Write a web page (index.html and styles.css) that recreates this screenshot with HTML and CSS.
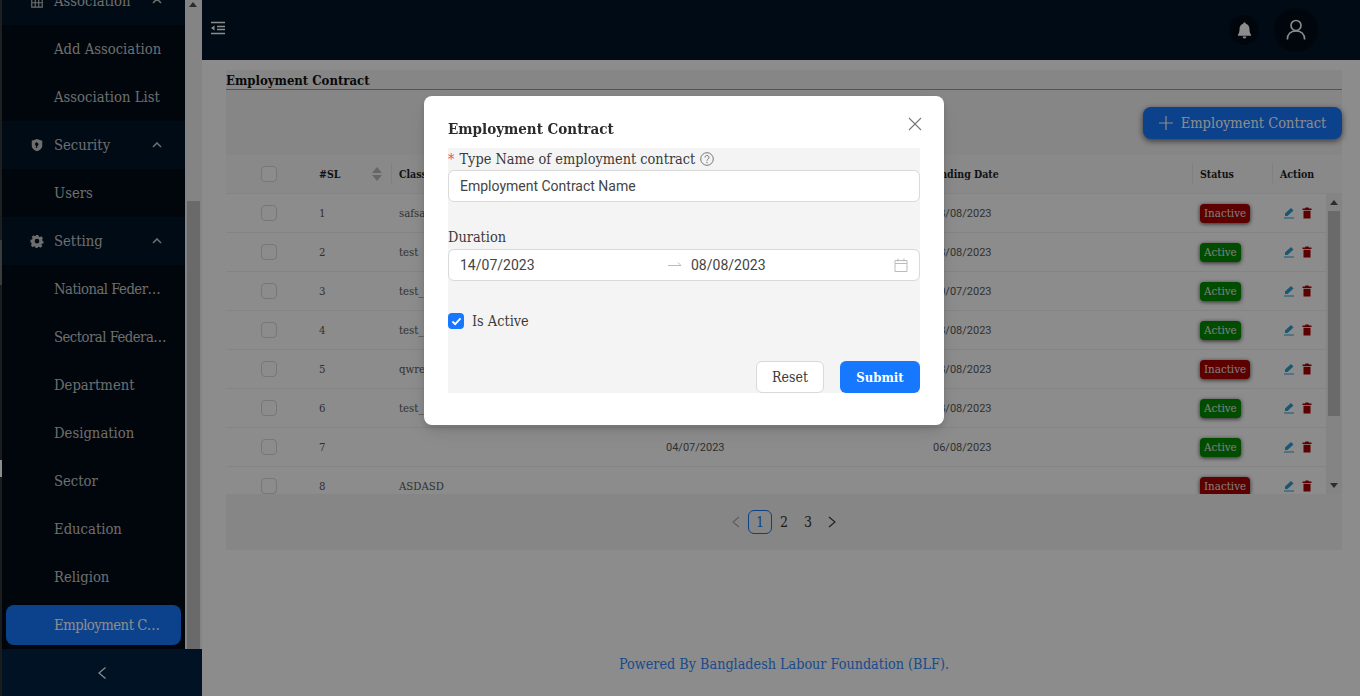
FILE: index.html
```html
<!DOCTYPE html>
<html lang="en">
<head>
  <meta charset="UTF-8" />
  <title>Employment Contract</title>
  <link rel="stylesheet" href="styles.css">
</head>
<body>
  <div class="app">
    <aside class="sider">
      <div class="edge"></div>
      <div class="sider-inner">
        <div class="sider-scroll">
          <ul class="menu">
            <li class="menu-top">
              <svg class="menu-icon" viewBox="0 0 16 16"><path d="M2 1h12v14H2zM6 1v14M10 1v14M2 6h12M2 10h12" fill="none" stroke="currentColor" stroke-width="1.3"/></svg>
              <span class="menu-label">Association</span>
              <svg class="chev" viewBox="0 0 10 6"><path d="M1 5l4-4 4 4" fill="none" stroke="currentColor" stroke-width="1.6"/></svg>
            </li>
            <li class="menu-sub">Add Association</li>
            <li class="menu-sub">Association List</li>
            <li class="menu-top">
              <svg class="menu-icon" viewBox="0 0 16 16"><path fill-rule="evenodd" d="M8 1l6 2v6c0 3-3 5-6 6-3-1-6-3-6-6V3zM8 5a2.2 2.2 0 0 0-1 4.2L6.500 11h2L8 9.300A2.200 2.200 0 0 0 8 5z" fill="currentColor"/></svg>
              <span class="menu-label">Security</span>
              <svg class="chev" viewBox="0 0 10 6"><path d="M1 5l4-4 4 4" fill="none" stroke="currentColor" stroke-width="1.6"/></svg>
            </li>
            <li class="menu-sub">Users</li>
            <li class="menu-top">
              <svg class="menu-icon" viewBox="0 0 16 16"><path fill-rule="evenodd" d="M6.500 1h3l.4 1.900 1.300.6 1.700-1 2 2.300-1.100 1.600.4 1.300L15.500 8.500v2l-1.800.5-.6 1.300 1 1.600-2.200 1.700-1.500-1-1.400.3-.5 1.100h-2l-.6-1.500-1.300-.4-1.600.9-2-2.200 1-1.600-.5-1.300L.5 9.500v-3l1.900-.3.500-1.300-1-1.600 2.100-1.800 1.600 1 1.200-.5zM8 5.500a2.700 2.700 0 1 0 0 5.400 2.700 2.700 0 0 0 0-5.400z" fill="currentColor"/></svg>
              <span class="menu-label">Setting</span>
              <svg class="chev" viewBox="0 0 10 6"><path d="M1 5l4-4 4 4" fill="none" stroke="currentColor" stroke-width="1.6"/></svg>
            </li>
            <li class="menu-sub trunc">National Feder…</li>
            <li class="menu-sub trunc">Sectoral Federa…</li>
            <li class="menu-sub">Department</li>
            <li class="menu-sub">Designation</li>
            <li class="menu-sub">Sector</li>
            <li class="menu-sub">Education</li>
            <li class="menu-sub">Religion</li>
            <li class="menu-sub selected trunc"><span>Employment C…</span></li>
          </ul>
          <div class="sider-bar">
            <span class="arrow-up"></span>
            <div class="sider-thumb"></div>
          </div>
        </div>
        <div class="sider-trigger">
          <svg viewBox="0 0 10 14" width="10" height="14"><path d="M8.500 1.500L2 7l6.500 5.500" fill="none" stroke="currentColor" stroke-width="1.200"/></svg>
        </div>
      </div>
    </aside>

    <div class="main">
      <header class="topbar">
        <svg class="fold" viewBox="0 0 16 14" width="16" height="14"><path d="M1 1.500h14M7 5.500h8M7 8.500h8M1 12.500h14" stroke="currentColor" stroke-width="1.400"/><path d="M4.500 4.500L1 7l3.500 2.500z" fill="currentColor"/></svg>
        <div class="topbar-right">
          <div class="bell-wrap">
            <svg viewBox="0 0 16 18" width="15" height="17"><path d="M8 0.500c.8 0 1.400.6 1.400 1.300C12 2.500 13.300 4.700 13.300 7.500c0 3.500.7 4.800 1.700 6v1H1v-1c1-1.200 1.700-2.500 1.700-6 0-2.800 1.300-5 3.900-5.700C6.600 1.100 7.200.5 8 .5zM6 15.500h4a2 2 0 0 1-4 0z" fill="currentColor"/></svg>
          </div>
          <div class="user-wrap">
            <svg viewBox="0 0 22 24" width="20" height="22"><circle cx="11" cy="7" r="5.500" fill="none" stroke="currentColor" stroke-width="1.800"/><path d="M1.500 22.500c0-6 4-9.500 9.500-9.500s9.500 3.500 9.500 9.500" fill="none" stroke="currentColor" stroke-width="1.800"/></svg>
          </div>
        </div>
      </header>

      <main class="content">
        <h2 class="page-title">Employment Contract</h2>
        <section class="card">
          <div class="card-tools">
            <button class="add-btn" type="button">
              <svg viewBox="0 0 14 14" width="14" height="14"><path d="M7 0v14M0 7h14" stroke="currentColor" stroke-width="1.200"/></svg>
              Employment Contract
            </button>
          </div>
          <div class="table-head">
            <div class="c-check"><span class="check"></span></div>
            <div class="c-sl">#SL<span class="sorter"><i class="sort-up"></i><i class="sort-down"></i></span></div>
            <div class="c-name">Class</div>
            <div class="c-date">Starting Date</div>
            <div class="c-date">Ending Date</div>
            <div class="c-status">Status</div>
            <div class="c-action">Action</div>
            <div class="c-gutter"></div>
          </div>
          <div class="table-body">
            <div class="rows">
              <div class="row"><div class="c-check"><span class="check"></span></div><div class="c-sl">1</div><div class="c-name">safsa</div><div class="c-date date">01/07/2023</div><div class="c-date date">08/08/2023</div><div class="c-status"><span class="tag off">Inactive</span></div><div class="c-action"><svg class="edit" viewBox="0 0 12 12"><use href="#pen"/></svg><svg class="del" viewBox="0 0 12 12"><use href="#bin"/></svg></div></div>
              <div class="row"><div class="c-check"><span class="check"></span></div><div class="c-sl">2</div><div class="c-name">test</div><div class="c-date date">01/07/2023</div><div class="c-date date">08/08/2023</div><div class="c-status"><span class="tag on">Active</span></div><div class="c-action"><svg class="edit" viewBox="0 0 12 12"><use href="#pen"/></svg><svg class="del" viewBox="0 0 12 12"><use href="#bin"/></svg></div></div>
              <div class="row"><div class="c-check"><span class="check"></span></div><div class="c-sl">3</div><div class="c-name">test_</div><div class="c-date date">01/07/2023</div><div class="c-date date">30/07/2023</div><div class="c-status"><span class="tag on">Active</span></div><div class="c-action"><svg class="edit" viewBox="0 0 12 12"><use href="#pen"/></svg><svg class="del" viewBox="0 0 12 12"><use href="#bin"/></svg></div></div>
              <div class="row"><div class="c-check"><span class="check"></span></div><div class="c-sl">4</div><div class="c-name">test_</div><div class="c-date date">01/07/2023</div><div class="c-date date">08/08/2023</div><div class="c-status"><span class="tag on">Active</span></div><div class="c-action"><svg class="edit" viewBox="0 0 12 12"><use href="#pen"/></svg><svg class="del" viewBox="0 0 12 12"><use href="#bin"/></svg></div></div>
              <div class="row"><div class="c-check"><span class="check"></span></div><div class="c-sl">5</div><div class="c-name">qwre</div><div class="c-date date">01/07/2023</div><div class="c-date date">08/08/2023</div><div class="c-status"><span class="tag off">Inactive</span></div><div class="c-action"><svg class="edit" viewBox="0 0 12 12"><use href="#pen"/></svg><svg class="del" viewBox="0 0 12 12"><use href="#bin"/></svg></div></div>
              <div class="row"><div class="c-check"><span class="check"></span></div><div class="c-sl">6</div><div class="c-name">test_</div><div class="c-date date">01/07/2023</div><div class="c-date date">08/08/2023</div><div class="c-status"><span class="tag on">Active</span></div><div class="c-action"><svg class="edit" viewBox="0 0 12 12"><use href="#pen"/></svg><svg class="del" viewBox="0 0 12 12"><use href="#bin"/></svg></div></div>
              <div class="row"><div class="c-check"><span class="check"></span></div><div class="c-sl">7</div><div class="c-name"></div><div class="c-date date">04/07/2023</div><div class="c-date date">06/08/2023</div><div class="c-status"><span class="tag on">Active</span></div><div class="c-action"><svg class="edit" viewBox="0 0 12 12"><use href="#pen"/></svg><svg class="del" viewBox="0 0 12 12"><use href="#bin"/></svg></div></div>
              <div class="row"><div class="c-check"><span class="check"></span></div><div class="c-sl">8</div><div class="c-name">ASDASD</div><div class="c-date date"></div><div class="c-date date"></div><div class="c-status"><span class="tag off">Inactive</span></div><div class="c-action"><svg class="edit" viewBox="0 0 12 12"><use href="#pen"/></svg><svg class="del" viewBox="0 0 12 12"><use href="#bin"/></svg></div></div>
            </div>
            <div class="table-bar">
              <span class="arrow-up"></span>
              <div class="table-thumb"></div>
              <span class="arrow-down"></span>
            </div>
          </div>
          <nav class="pager">
            <span class="pg-arrow muted"><svg viewBox="0 0 10 12" width="10" height="12"><path d="M8 1L2 6l6 5" fill="none" stroke="currentColor" stroke-width="1.100"/></svg></span>
            <span class="pg current">1</span>
            <span class="pg">2</span>
            <span class="pg">3</span>
            <span class="pg-arrow"><svg viewBox="0 0 10 12" width="10" height="12"><path d="M2 1l6 5-6 5" fill="none" stroke="currentColor" stroke-width="1.100"/></svg></span>
          </nav>
        </section>
      </main>

      <footer class="foot">Powered By Bangladesh Labour Foundation (BLF).</footer>
    </div>
  </div>

  <svg class="defs" width="0" height="0">
    <symbol id="pen" viewBox="0 0 12 12"><path d="M8 1l2.500 2.500L4.500 9H2V6.500zM1 10.500h10v1H1z" fill="currentColor"/></symbol>
    <symbol id="bin" viewBox="0 0 12 12"><path d="M4.500 .5h3l.5 1h2.500v1.500h-9V1.500H4zM2.500 3.800h7V11.500h-7z" fill="currentColor"/></symbol>
  </svg>

  <div class="mask">
    <div class="modal">
      <svg class="modal-close" viewBox="0 0 14 14" width="14" height="14"><path d="M1 1l12 12M13 1L1 13" stroke="currentColor" stroke-width="1.100"/></svg>
      <h3 class="modal-title">Employment Contract</h3>
      <form class="form">
        <label class="form-label"><span class="req">*</span> Type Name of employment contract
          <svg class="help" viewBox="0 0 14 14" width="14" height="14"><circle cx="7" cy="7" r="6.300" fill="none" stroke="currentColor"/><path d="M5 5.500a2 2 0 1 1 3 1.700c-.7.400-1 .8-1 1.500" fill="none" stroke="currentColor"/><circle cx="7" cy="10.500" r=".7" fill="currentColor"/></svg>
        </label>
        <div class="field name-field">Employment Contract Name</div>

        <label class="form-label duration-label">Duration</label>
        <div class="field range-field">
          <span class="range-start">14/07/2023</span>
          <svg class="range-arrow" viewBox="0 0 14 8" width="14" height="8"><path d="M0 4.500h13M10 1.500l3 3" fill="none" stroke="currentColor"/></svg>
          <span class="range-end">08/08/2023</span>
          <svg class="calendar" viewBox="0 0 14 14" width="14" height="14"><path d="M1 2.500h12v11H1zM1 5.500h12M4 .5v3M10 .5v3" fill="none" stroke="currentColor"/></svg>
        </div>

        <div class="active-row">
          <span class="tick">
            <svg viewBox="0 0 12 10" width="11" height="9"><path d="M1.500 5l3 3 6-6.500" fill="none" stroke="#fff" stroke-width="2"/></svg>
          </span>
          Is Active
        </div>

        <div class="form-btns">
          <button class="btn-reset" type="button">Reset</button>
          <button class="btn-submit" type="button">Submit</button>
        </div>
      </form>
    </div>
  </div>
</body>
</html>
```

FILE: styles.css
```css
* { box-sizing: border-box; }
html, body { margin: 0; height: 100%; overflow: hidden; }
body { font-family: "DejaVu Serif Condensed", "DejaVu Serif", serif; font-size: 13px; color: #1f1f1f; background: #fff; }
ul { list-style: none; margin: 0; padding: 0; }

.app { display: flex; height: 696px; }

/* sidebar */
.sider { width: 202px; flex: none; display: flex; }
.edge { width: 2px; flex: none; background: linear-gradient(#36393c 0, #36393c 240px, #6c6c6c 240px, #6c6c6c 285px, #303437 285px, #303437 460px, #fff 460px, #fff 477px, #303437 477px); }
.sider-inner { flex: 1; min-width: 0; display: flex; flex-direction: column; background: #001529; }
.sider-scroll { flex: 1; min-height: 0; display: flex; overflow: hidden; }
.menu { flex: 1; min-width: 0; margin-top: -23px; color: #c8c8c8; font-size: 14.7px; }
.menu-top { height: 48px; display: flex; align-items: center; padding: 0 23px 0 28px; background: #001529; }
.menu-icon { width: 14px; height: 14px; flex: none; color: #c8c8c8; }
.menu-label { flex: 1; margin: 0 0 2px 10px; }
.chev { width: 10px; height: 6px; color: #c8c8c8; }
.menu-sub { height: 48px; display: flex; align-items: center; padding: 0 0 2px 52px; background: #000c17; white-space: nowrap; }
.trunc { letter-spacing: -.5px; }
.menu-sub.selected { padding: 0; }
.menu-sub.selected span { margin-left: 4px; width: 175px; height: 40px; padding-left: 48px; line-height: 39px; background: #1677ff; border-radius: 8px; color: #fff; }
.sider-bar { width: 17px; flex: none; background: #f1f1f1; position: relative; }
.sider-thumb { position: absolute; left: 2px; right: 2px; top: 201px; bottom: 0; background: #c1c1c1; }
.sider-bar .arrow-up { position: absolute; top: 2px; left: 4px; }
.arrow-up { display: block; width: 0; height: 0; border: 4px solid transparent; border-top: 0; border-bottom: 5px solid #505050; }
.arrow-down { display: block; width: 0; height: 0; border: 4px solid transparent; border-bottom: 0; border-top: 5px solid #505050; }
.sider-trigger { height: 47px; flex: none; background: #002140; color: #fff; display: flex; align-items: center; justify-content: center; }

/* main column */
.main { flex: 1; min-width: 0; display: flex; flex-direction: column; }
.topbar { height: 60px; flex: none; background: #001529; color: #fff; display: flex; align-items: center; justify-content: space-between; padding: 0 42px 4px 8px; }
.topbar-right { display: flex; align-items: center; gap: 15px; margin-top: 4px; }
.bell-wrap { width: 30px; height: 30px; border-radius: 50%; background: #000c17; display: flex; align-items: center; justify-content: center; }
.user-wrap { width: 44px; height: 44px; border-radius: 50%; background: #000c17; display: flex; align-items: center; justify-content: center; }

.content { padding: 10px 18px 0 24px; }
.page-title { margin: 0; height: 20px; font-size: 13px; font-weight: bold; line-height: 21px; background: #f5f5f5; border-bottom: 1px solid #999; color: #111; }
.card { background: #f5f5f5; height: 460px; }
.card-tools { height: 65px; display: flex; justify-content: flex-end; padding-top: 17px; }
.add-btn { height: 32px; width: 199px; display: flex; align-items: center; justify-content: center; gap: 8px; border: 0; border-radius: 8px; background: #1677ff; color: #fff; font: inherit; font-size: 14.500px; box-shadow: 0 2px 6px rgba(0,0,0,0.6); }

/* table */
.table-head { height: 39px; display: flex; align-items: center; background: #fafafa; border-bottom: 1px solid #f0f0f0; font-size: 10.500px; font-weight: bold; color: #1f1f1f; }
.table-body { height: 300px; display: flex; overflow: hidden; }
.rows { flex: 1; min-width: 0; background: #fff; }
.row { height: 39px; display: flex; align-items: center; border-bottom: 1px solid #f0f0f0; font-size: 11.300px; color: #5a5a5a; }
.c-check { width: 85px; flex: none; display: flex; justify-content: center; padding-left: 1px; }
.c-sl { width: 80px; flex: none; padding-left: 8px; position: relative; }
.c-name { width: 267px; flex: none; padding-left: 8px; }
.c-date { width: 267px; flex: none; padding-left: 8px; }
.date { font-family: "Roboto", sans-serif; font-size: 11px; }
.c-status { width: 80px; flex: none; padding-left: 8px; }
.c-action { width: 54px; flex: none; padding-left: 8px; display: flex; gap: 6px; }
.row .c-action { padding-left: 11px; }
.c-gutter { width: 16px; flex: none; }
.table-head .c-name, .table-head .c-status, .table-head .c-action { background: linear-gradient(#ececec, #ececec) no-repeat left center / 1px 22px; line-height: 22px; }
.check { display: block; width: 16px; height: 16px; border: 1px solid #d9d9d9; border-radius: 4px; background: #fff; }
.sorter { position: absolute; right: 9px; top: -1px; display: flex; flex-direction: column; gap: 2px; }
.sort-up { display: block; width: 0; height: 0; border: 5px solid transparent; border-top: 0; border-bottom-color: #bbb; border-bottom-width: 6px; }
.sort-down { display: block; width: 0; height: 0; border: 5px solid transparent; border-bottom: 0; border-top-color: #bbb; border-top-width: 6px; }
.tag { display: inline-block; padding: 0 4px; height: 19px; line-height: 19px; border-radius: 4px; color: #e8e8e8; font-size: 11.500px; box-shadow: 0 1px 4px rgba(0,0,0,0.7); }
.tag.off { background: #a80000; }
.tag.on { background: #008c00; }
.edit { width: 12px; height: 12px; color: #2e9fd0; }
.del { width: 12px; height: 12px; color: #a80000; }
.table-bar { width: 16px; flex: none; background: #f1f1f1; position: relative; }
.table-bar .arrow-up { position: absolute; top: 6px; left: 4px; }
.table-bar .arrow-down { position: absolute; bottom: 6px; left: 4px; }
.table-thumb { position: absolute; top: 17px; left: 2px; right: 2px; height: 205px; background: #c1c1c1; }
.defs { position: absolute; }

/* pagination */
.pager { height: 56px; display: flex; align-items: center; justify-content: center; font-size: 14px; color: #333; }
.pg, .pg-arrow { width: 24px; height: 24px; line-height: 22px; text-align: center; border: 1px solid transparent; border-radius: 6px; }
.pg-arrow { display: flex; align-items: center; justify-content: center; }
.pg-arrow.muted { color: #aaa; }
.pg.current { border-color: #1677ff; color: #1677ff; }

.foot { flex: 1; display: flex; align-items: flex-end; justify-content: center; padding: 0 0 24px 6px; color: #3088ff; font-size: 14.250px; }

/* modal */
.mask { position: fixed; inset: 0; background: rgba(0,0,0,0.45); display: flex; justify-content: center; padding: 96px 0 0 8px; }
.modal { position: relative; width: 520px; height: 329px; background: #fff; border-radius: 8px; padding: 24px; box-shadow: 0 6px 16px rgba(0,0,0,0.08), 0 3px 6px rgba(0,0,0,0.12), 0 9px 28px rgba(0,0,0,0.05); }
.modal-close { position: absolute; top: 21px; right: 22px; color: #777; }
.modal-title { margin: 0; height: 28px; line-height: 18px; font-size: 15px; font-weight: bold; color: #2b2b2b; }
.form { background: #f4f4f4; height: 245px; font-size: 14.400px; color: #3a3a3a; position: relative; }
.form-label { display: flex; align-items: center; gap: 5px; height: 22px; line-height: 22px; }
.req { color: #ff4d4f; }
.help { color: #777; }
.field { height: 32px; background: #fff; border: 1px solid #d9d9d9; border-radius: 6px; font-family: "Roboto", sans-serif; font-size: 14px; color: #444; display: flex; align-items: center; padding: 0 11px; }
.duration-label { margin-top: 23px; height: 24px; padding-bottom: 1px; }
.range-start { width: 208px; }
.range-arrow { color: #bbb; margin-right: 9px; }
.range-end { flex: 1; }
.calendar { color: #bbb; }
.active-row { display: flex; align-items: center; gap: 8px; margin-top: 32px; height: 16px; }
.tick { width: 16px; height: 16px; border-radius: 4px; background: #1677ff; display: flex; align-items: center; justify-content: center; }
.form-btns { position: absolute; right: 0; bottom: 0; display: flex; gap: 16px; font-size: 14px; }
.btn-reset, .btn-submit { height: 32px; border-radius: 6px; font: inherit; }
.btn-reset { width: 68px; background: #fff; border: 1px solid #d9d9d9; color: #3a3a3a; }
.btn-submit { width: 80px; background: #1677ff; border: 0; color: #fff; font-weight: bold; font-size: 13px; }
```
